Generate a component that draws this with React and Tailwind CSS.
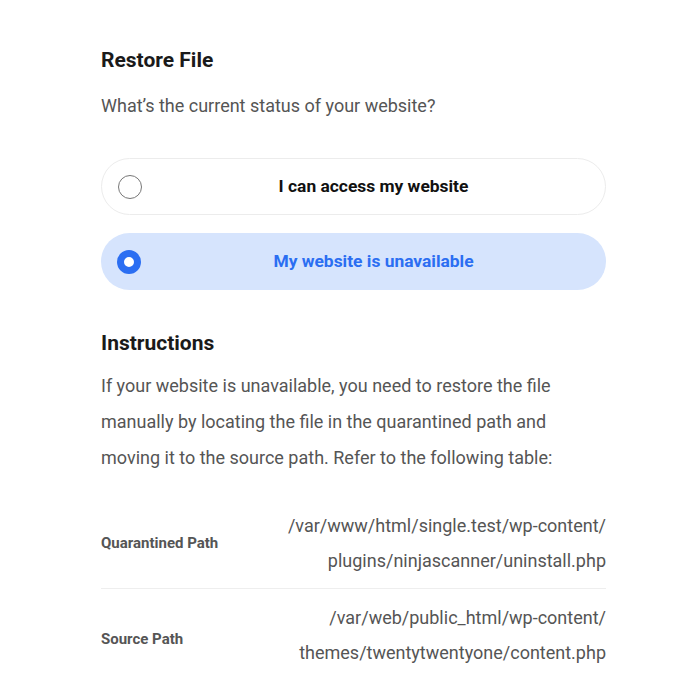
import React, { useState } from 'react';

const options = [
  { id: 'access', label: 'I can access my website' },
  { id: 'unavailable', label: 'My website is unavailable' },
];

const paths = [
  {
    label: 'Quarantined Path',
    lines: ['/var/www/html/single.test/wp-content/', 'plugins/ninjascanner/uninstall.php'],
  },
  {
    label: 'Source Path',
    lines: ['/var/web/public_html/wp-content/', 'themes/twentytwentyone/content.php'],
  },
];

const App = () => {
  const [status, setStatus] = useState('unavailable');

  return (
    <div className="min-h-[700px] bg-white font-['Roboto',sans-serif]">
      <div className="w-[505px] ml-[101px] pt-[47px]">
        <h2 className="text-[21px] leading-[26px] font-bold text-[#1a1a1a]">Restore File</h2>
        <p className="mt-[20px] text-[18px] leading-[26px] text-[#555]">
          What’s the current status of your website?
        </p>

        <div className="mt-[39px] flex flex-col gap-[18px]">
          {options.map((opt) => {
            const active = status === opt.id;
            return (
              <button
                key={opt.id}
                onClick={() => setStatus(opt.id)}
                className={`relative h-[57px] w-full rounded-full flex items-center justify-center pl-[40px] ${
                  active ? 'bg-[#d6e4fd]' : 'bg-white border border-[#ececec]'
                }`}
              >
                <span
                  className={`absolute left-[16px] top-1/2 -translate-y-1/2 w-[24px] h-[24px] rounded-full ${
                    active ? 'border-[7px] border-[#2b6ef2] bg-white' : 'border-[1.5px] border-[#777]'
                  }`}
                />
                <span
                  className={`text-[17.4px] font-bold ${active ? 'text-[#2b6ef2]' : 'text-[#111]'}`}
                >
                  {opt.label}
                </span>
              </button>
            );
          })}
        </div>

        <h2 className="mt-[40px] text-[21px] leading-[26px] font-bold text-[#1a1a1a]">Instructions</h2>
        <p className="mt-[12px] text-[18px] leading-[36px] text-[#555]">
          If your website is unavailable, you need to restore the file manually by locating the file
          in the quarantined path and moving it to the source path. Refer to the following table:
        </p>

        <div className="mt-[32px]">
          {paths.map((row, i) => (
            <div
              key={row.label}
              className={`flex items-center justify-between ${
                i === 0 ? 'pb-[10px] border-b border-[#eeeeee]' : 'pt-[11px]'
              }`}
            >
              <p className={`text-[15px] font-bold text-[#555] ${i === 0 ? '' : 'pt-[9px]'}`}>
                {row.label}
              </p>
              <div className="text-right text-[18px] leading-[35px] text-[#555]">
                {row.lines.map((l) => (
                  <div key={l}>{l}</div>
                ))}
              </div>
            </div>
          ))}
        </div>
      </div>
    </div>
  );
};

export default App;
